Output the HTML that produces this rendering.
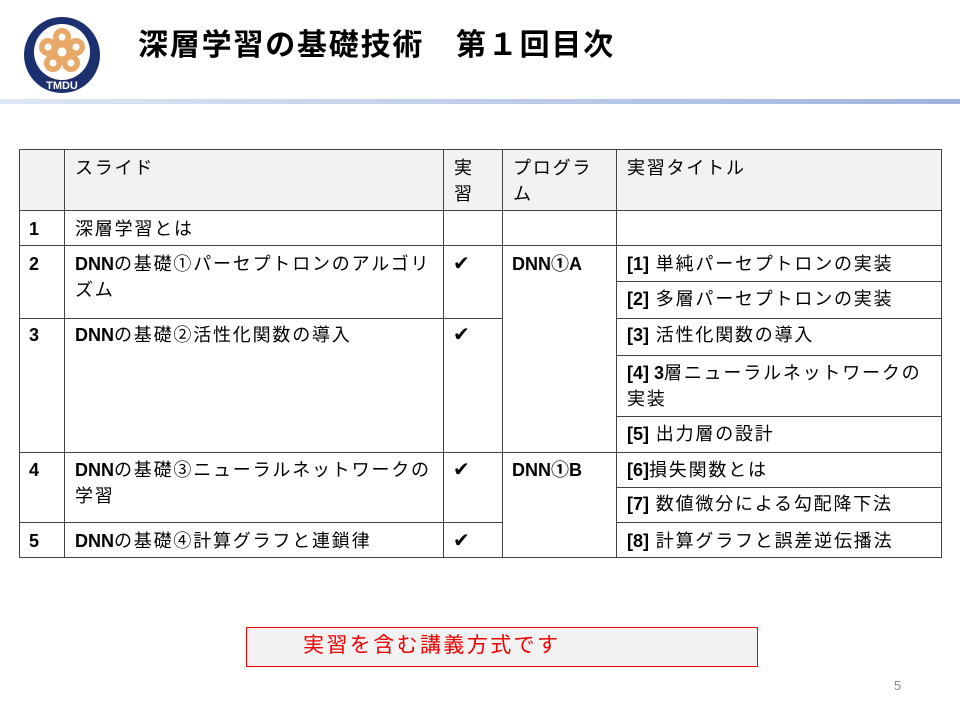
<!DOCTYPE html>
<html><head><meta charset="utf-8"><style>
*{margin:0;padding:0;box-sizing:border-box}
body{width:960px;height:720px;background:#fff;position:relative;overflow:hidden;font-family:"Liberation Sans","Noto Sans CJK JP",sans-serif;color:#000}
.h{position:absolute;height:1px;background:#444}
.v{position:absolute;width:1px;background:#444}
.t{position:absolute;font-size:18px;letter-spacing:1.8px;line-height:26px;white-space:nowrap}
.t b{font-weight:bold;letter-spacing:0}
.n{font-weight:bold;letter-spacing:0}
.ck{position:absolute;font-size:20px;font-family:"DejaVu Sans",sans-serif}
</style></head><body>
<svg style="position:absolute;left:22px;top:15px" width="80" height="80" viewBox="0 0 80 80">
<circle cx="40" cy="40" r="38" fill="#1c2f6e"/>
<circle cx="40" cy="37" r="28" fill="#fff"/>
<g fill="#e8a868">
<circle cx="40" cy="22" r="9"/><circle cx="54" cy="32" r="9"/><circle cx="49" cy="48" r="9"/><circle cx="31" cy="48" r="9"/><circle cx="26" cy="32" r="9"/><circle cx="40" cy="37" r="10"/>
</g>
<g fill="#fff"><circle cx="40" cy="22" r="3.5"/><circle cx="54" cy="32" r="3.5"/><circle cx="49" cy="48" r="3.5"/><circle cx="31" cy="48" r="3.5"/><circle cx="26" cy="32" r="3.5"/><circle cx="40" cy="37" r="4.5"/></g>
<text x="40" y="74" font-size="11" fill="#fff" text-anchor="middle" font-family="Liberation Sans" font-weight="bold">TMDU</text>
</svg>
<div style="position:absolute;left:138px;top:27px;font-size:30px;letter-spacing:1.8px;font-weight:bold;white-space:nowrap;line-height:38px">深層学習の基礎技術　第１回目次</div>
<div style="position:absolute;left:0;top:99px;width:960px;height:5px;background:linear-gradient(90deg,#dfe6f4,#9fb5de)"></div>

<div style="position:absolute;left:19px;top:149px;width:922px;height:61px;background:#f2f2f2"></div>
<div class="h" style="left:19px;top:149px;width:923px"></div>
<div class="h" style="left:19px;top:210px;width:923px"></div>
<div class="h" style="left:19px;top:245px;width:923px"></div>
<div class="h" style="left:616px;top:281px;width:326px"></div>
<div class="h" style="left:19px;top:318px;width:484px"></div>
<div class="h" style="left:616px;top:318px;width:326px"></div>
<div class="h" style="left:616px;top:355px;width:326px"></div>
<div class="h" style="left:616px;top:416px;width:326px"></div>
<div class="h" style="left:19px;top:452px;width:923px"></div>
<div class="h" style="left:616px;top:487px;width:326px"></div>
<div class="h" style="left:19px;top:522px;width:484px"></div>
<div class="h" style="left:616px;top:522px;width:326px"></div>
<div class="h" style="left:19px;top:557px;width:923px"></div>
<div class="v" style="left:19px;top:149px;height:409px"></div>
<div class="v" style="left:64px;top:149px;height:409px"></div>
<div class="v" style="left:443px;top:149px;height:409px"></div>
<div class="v" style="left:502px;top:149px;height:409px"></div>
<div class="v" style="left:616px;top:149px;height:409px"></div>
<div class="v" style="left:941px;top:149px;height:409px"></div>

<div class="t" style="left:75px;top:155px">スライド</div>
<div class="t" style="left:454px;top:155px">実<br>習</div>
<div class="t" style="left:513px;top:155px">プログラ<br>ム</div>
<div class="t" style="left:627px;top:155px">実習タイトル</div>

<div class="t n" style="left:29px;top:216px">1</div>
<div class="t" style="left:75px;top:216px">深層学習とは</div>
<div class="t n" style="left:29px;top:251px">2</div>
<div class="t" style="left:75px;top:251px"><b>DNN</b>の基礎①パーセプトロンのアルゴリ<br>ズム</div>
<div class="t n" style="left:29px;top:322px">3</div>
<div class="t" style="left:75px;top:322px"><b>DNN</b>の基礎②活性化関数の導入</div>
<div class="t n" style="left:29px;top:457px">4</div>
<div class="t" style="left:75px;top:457px"><b>DNN</b>の基礎③ニューラルネットワークの<br>学習</div>
<div class="t n" style="left:29px;top:528px">5</div>
<div class="t" style="left:75px;top:528px"><b>DNN</b>の基礎④計算グラフと連鎖律</div>

<div class="ck" style="left:453px;top:251px">✔</div>
<div class="ck" style="left:453px;top:322px">✔</div>
<div class="ck" style="left:453px;top:457px">✔</div>
<div class="ck" style="left:453px;top:528px">✔</div>

<div class="t n" style="left:512px;top:251px">DNN①A</div>
<div class="t n" style="left:512px;top:457px">DNN①B</div>

<div class="t" style="left:627px;top:251px"><b>[1]</b> 単純パーセプトロンの実装</div>
<div class="t" style="left:627px;top:286px"><b>[2]</b> 多層パーセプトロンの実装</div>
<div class="t" style="left:627px;top:322px"><b>[3]</b> 活性化関数の導入</div>
<div class="t" style="left:627px;top:360px"><b>[4] 3</b>層ニューラルネットワークの<br>実装</div>
<div class="t" style="left:627px;top:421px"><b>[5]</b> 出力層の設計</div>
<div class="t" style="left:627px;top:457px"><b>[6]</b>損失関数とは</div>
<div class="t" style="left:627px;top:491px"><b>[7]</b> 数値微分による勾配降下法</div>
<div class="t" style="left:627px;top:528px"><b>[8]</b> 計算グラフと誤差逆伝播法</div>

<div style="position:absolute;left:246px;top:627px;width:512px;height:40px;background:#f2f2f2;border:1px solid #e00"></div>
<div style="position:absolute;left:303px;top:632px;font-size:21px;letter-spacing:2.4px;line-height:28px;color:#e00;white-space:nowrap">実習を含む講義方式です</div>
<div style="position:absolute;left:894px;top:678px;font-size:13px;color:#888">5</div>
</body></html>
